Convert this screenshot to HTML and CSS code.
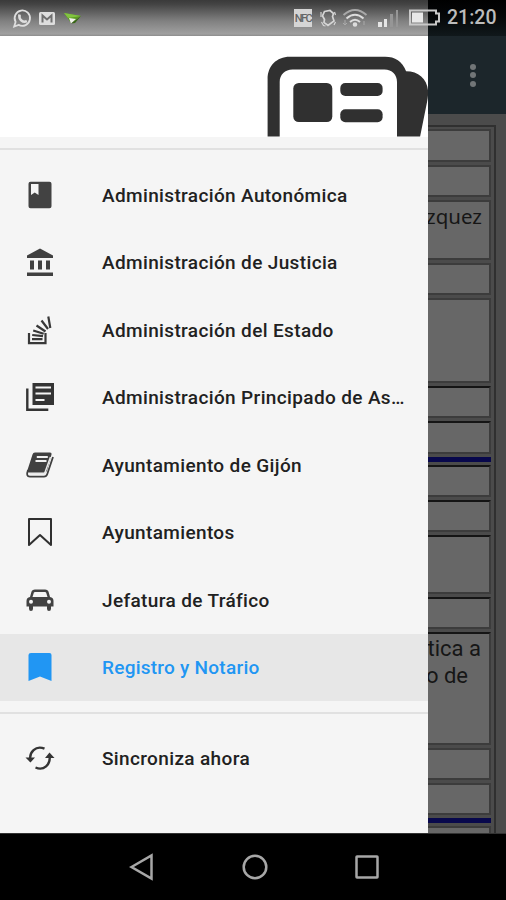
FILE: index.html
```html
<!DOCTYPE html>
<html lang="es">
<head>
<meta charset="utf-8">
<title>Trámites</title>
<link rel="stylesheet" href="styles.css">
</head>
<body>
<div class="phone">
  <header class="status">
    <svg class="notifications" viewBox="0 0 75 24" width="75" height="24">
      <g fill="none" stroke="#dedede">
        <path d="M2.2 20.500l1.400-4.600a7.700 7.700 0 1 1 3 3z" stroke-width="1.800"/>
        <path d="M7.500 8.500c-1 5.400 3.600 8.500 7.400 6.700" stroke-width="2.600"/>
      </g>
      <rect x="27" y="6" width="16" height="13" rx="1.500" fill="#dedede"/>
      <path d="M30.500 16.500V9.500l4.500 4 4.500-4v7" fill="none" stroke="#707070" stroke-width="2"/>
      <path d="M52 7l17 3-10 7z" fill="#5b9d20"/>
      <path d="M52 7l17 3-13 2z" fill="#82c341"/>
      <path d="M57 12l7 1-5 4.500z" fill="#f2f2ed"/>
      <path d="M69 10l-10 7.500 4-.5z" fill="#376714"/>
    </svg>
    <div class="system">
      <span class="nfc">NFC</span>
      <svg viewBox="0 0 18 20" width="18" height="20" fill="none" stroke="#d5d5d5" stroke-width="1.700">
        <path d="M5.500 3.500l5.500-1 3.500 3-1 3 1.500 4.500-6 4.500-4-3 .5-3L3.500 8z"/>
        <path d="M2 4v5M15.500 4l1 3M2.500 14l2 3.500 2 .5M16.500 14l-1.500 3" stroke-width="1.200"/>
      </svg>
      <svg class="wifi" viewBox="0 0 26 20" width="26" height="20" fill="none" stroke="#dcdcdc" stroke-width="2">
        <path d="M1.500 7q11.500-10 23 0" stroke="#a8a8a8"/>
        <path d="M4.500 10.500q8.500-7.500 17 0M8 14q5-4.500 10 0"/>
        <circle cx="13" cy="16.500" r="1.300" fill="#dcdcdc"/>
        <path d="M3 12v5m-2-2 2 2 2-2M22 17v-4" stroke="#aaa" stroke-width="1"/>
      </svg>
      <svg class="signal" viewBox="0 0 22 20" width="22" height="20">
        <path d="M1 14h4v5H1zM7 11h3v8H7z" fill="#e5e5e5"/>
        <path d="M13 6h3v13h-3zM19 2h2v17h-2z" fill="#969696"/>
      </svg>
      <svg class="battery" viewBox="0 0 32 18" width="32" height="18">
        <path d="M1 1.500h26v3h3v8h-3v3H1z" fill="none" stroke="#c9c9c9" stroke-width="2"/>
        <path d="M3 3.500h11v10H3z" fill="#e9e9e9"/>
      </svg>
      <time>21:20</time>
    </div>
  </header>

  <div class="content">
    <nav class="drawer">
      <div class="cover">
        <svg viewBox="267 56 162 81" width="162" height="81">
          <path d="M267.600 136.500V79c0-13 9-22.300 22-22.300h95.500c10 0 17 4.500 21 14.500 13 0 22 8.500 22 21.500 0 3-.4 6-1 9l-7 34.800H397V82c0-7.500-5-12.500-12.500-12.500H292.500c-7.500 0-12.800 5-12.800 12.500v54.500z" fill="#303030"/>
          <rect x="293.300" y="83" width="39" height="39" rx="5.500" fill="#303030"/>
          <rect x="340.300" y="83" width="42.300" height="13" rx="5" fill="#303030"/>
          <rect x="340.300" y="109.300" width="42.300" height="13" rx="5" fill="#303030"/>
        </svg>
      </div>
      <hr>
      <ul class="menu">
        <li><svg viewBox="0 0 28 28"><path d="M4.500.7h19q2 0 2 2v22.600q0 2-2 2h-19q-2 0-2-2V2.700q0-2 2-2z" fill="#424242"/><path d="M5 3h7.500v11L8.750 11.500 5 14z" fill="#f5f5f5"/></svg><span>Administración Autonómica</span></li>
        <li><svg viewBox="0 0 28 28"><path d="M14 .5l13 7v2.500H1V7.500zM4 12.500h4v9H4zM12 12.500h4v9h-4zM20 12.500h4v9h-4zM1 24.500h26V28H1z" fill="#404040"/></svg><span>Administración de Justicia</span></li>
        <li><svg viewBox="0 0 28 28" fill="none" stroke="#383838" stroke-width="2.200"><path d="M3 17v10.200h16.500V17M6 23.200h10.500M6.200 19l10.800 1.200M7.200 14.500l10.500 3.200M10.500 9.500l9 6M15.500 4.500l6.500 8.500M22.300.5l2 11.500"/></svg><span>Administración del Estado</span></li>
        <li><svg viewBox="0 0 28 28"><path d="M6.500 0H28v22H6.500z" fill="#343434"/><path d="M9.500 4.500h15.500M9.500 10.500h15.500M9.500 17h9" stroke="#f5f5f5" stroke-width="2.200"/><path d="M1.300 5.500v21.200h21" fill="none" stroke="#343434" stroke-width="2.400"/></svg><span>Administración Principado de As…</span></li>
        <li><svg viewBox="0 0 28 28"><path d="M9 1.500h15q2 0 1.500 2l-4.500 16q-.6 2-2.500 2H3q-1.500 0-2-1L6.500 3.500q.5-2 2.500-2z" fill="#404040"/><path d="M10.800 6h11M9.500 10h11" stroke="#f0f0f0" stroke-width="1.800"/><path d="M2 19Q-.5 25.700 4 25.700h14q2.400 0 3.200-2.400L27 6" fill="none" stroke="#404040" stroke-width="1.800"/><path d="M4 22.800h14.500L24.500 6" fill="none" stroke="#e9e9e9" stroke-width="1.500"/></svg><span>Ayuntamiento de Gijón</span></li>
        <li><svg viewBox="0 0 28 28"><path d="M3 1h22v26l-11-10L3 27z" fill="none" stroke="#303030" stroke-width="2" stroke-linejoin="round"/></svg><span>Ayuntamientos</span></li>
        <li><svg viewBox="0 0 28 28"><path d="M9 3.500h10q3 0 3.700 2.700L24 11q3.500.5 3.500 4v5.500H25v2.200q0 2.300-2 2.300t-2-2.300v-2.200H7v2.200Q7 25 5 25t-2-2.300v-2.200H.5V15q0-3.500 3.500-4l1.300-4.800Q6 3.500 9 3.500z" fill="#424242"/><path d="M9 6h10q.9 0 1.200.8l1.300 4.200h-15l1.300-4.200Q8.100 6 9 6z" fill="#f5f5f5"/><circle cx="5" cy="15.700" r="2" fill="#f5f5f5"/><circle cx="23" cy="15.700" r="2" fill="#f5f5f5"/></svg><span>Jefatura de Tráfico</span></li>
        <li class="selected"><svg viewBox="0 0 28 28"><path d="M5 0h18.500q2 0 2 2v26L14 23.500 2.500 28V2q0-2 2.500-2z" fill="#2196f3"/></svg><span>Registro y Notario</span></li>
      </ul>
      <hr class="second">
      <ul class="menu">
        <li><svg viewBox="0 0 28 28" fill="none" stroke="#343434" stroke-width="2.400"><path d="M4.500 17C2.500 8 10 1 18.500 4.700M23.500 11.500c1.500 9.500-6 15.500-14 12"/><path d="M-.5 13.500h9.500L4.500 18.500zM19 14h9.500l-5-5.500z" fill="#343434" stroke="none"/></svg><span>Sincroniza ahora</span></li>
      </ul>
    </nav>

    <main class="page">
      <div class="appbar"><i></i><i></i><i></i></div>
      <div class="sheet">
        <div class="table">
          <div></div>
          <div></div>
          <div class="name"><p>zquez</p></div>
          <div></div>
          <div></div>
          <div class="dark"></div>
          <div class="dark"></div>
          <b></b>
          <div class="dark"></div>
          <div class="dark"></div>
          <div class="dark"></div>
          <div class="dark"></div>
          <div class="dark note"><p>tica a</p><p class="short">o de</p></div>
          <div></div>
          <div></div>
          <b></b>
          <div></div>
        </div>
      </div>
    </main>
  </div>

  <footer class="keys">
    <svg viewBox="0 0 26 28" width="26" height="28"><path d="M2.500 14L22.500 2.500v23z"/></svg>
    <svg viewBox="0 0 26 28" width="26" height="28"><circle cx="13" cy="14" r="11.300"/></svg>
    <svg viewBox="0 0 26 28" width="26" height="28"><rect x="2.500" y="3.500" width="21" height="21" rx=".5"/></svg>
  </footer>
</div>
</body>
</html>
```
FILE: styles.css
```css
* { box-sizing: border-box; }

body {
  margin: 0;
  background: #000;
  font-family: Roboto, "Liberation Sans", sans-serif;
}

.phone {
  display: flex;
  flex-direction: column;
  width: 506px;
  height: 900px;
  overflow: hidden;
}

.status {
  display: flex;
  justify-content: space-between;
  align-items: center;
  flex: none;
  height: 36px;
  padding: 0 8px 0 12px;
  background:
    linear-gradient(#3a3a3a, #444 12%, #808080 58%, #a0a0a0 94%, #8d8d8d) 0 0 / 428px 36px no-repeat,
    linear-gradient(#000, #050708 45%, #10181b);
}

.system { display: flex; align-items: center; }

.nfc {
  width: 18px;
  height: 18px;
  margin-right: 7px;
  background: #d5d5d5;
  color: #656565;
  font: 500 11px/19px Roboto, sans-serif;
  letter-spacing: -1.500px;
  text-align: center;
}

.wifi { margin-left: 5px; }
.signal { margin-left: 9px; }
.battery { margin-left: 10px; }

.status time {
  width: 51px;
  margin-left: 6px;
  color: #bcbcbc;
  font-size: 19.500px;
  font-weight: 500;
  line-height: 38px;
  white-space: nowrap;
}

.content { display: flex; flex: 1; min-height: 0; }

.drawer {
  width: 428px;
  flex: none;
  overflow: hidden;
  background: #f5f5f5;
}

.cover {
  display: flex;
  justify-content: flex-end;
  align-items: flex-end;
  height: 101px;
  background: #fff;
}

.cover svg { margin-right: -1px; }

.drawer hr {
  height: 2px;
  margin: 11px 0;
  border: 0;
  background: #e1e1e1;
}

.drawer .second { margin: 10.500px 0; }

.menu { margin: 0; padding: 0; list-style: none; }

.menu li {
  display: flex;
  align-items: center;
  height: 67.500px;
  padding: 0 22px 0 26px;
  color: #212121;
  font-size: 19px;
  font-weight: 500;
  letter-spacing: .36px;
}

.menu svg { flex: none; width: 28px; height: 28px; margin-right: 48px; overflow: visible; }

.menu span { padding-top: 1px; white-space: nowrap; }

.menu .selected { background: #e7e7e7; color: #2196f3; letter-spacing: .25px; }

.page {
  display: flex;
  flex-direction: column;
  flex: 1;
  min-width: 0;
  overflow: hidden;
  background: #4b4b4b;
}

.appbar {
  display: flex;
  flex: none;
  flex-direction: column;
  align-items: center;
  justify-content: center;
  gap: 2.500px;
  height: 78px;
  padding-left: 12px;
  background: #1c262b;
}

.appbar i { width: 6px; height: 6px; border-radius: 50%; background: #717577; }

.sheet { padding: 11px 10px 0 0; }

.table {
  display: grid;
  grid-template-columns: minmax(0, 1fr);
  grid-template-rows: 33px 32px 60px 31.500px 85px 32.500px 32.500px 5.500px 32px 32px 58.500px 32.500px 112.500px 32px 32px 5.500px 30px;
  row-gap: 3px;
  padding: 2px 3px 0 0;
  border: solid #303030;
  border-width: 2px 2px 0 0;
}

.table > div {
  border: solid #3c3c3c;
  border-width: 2px 2px 2px 0;
  background: #676767;
}

.table > .dark { border-top-color: #151515; }
.table b { background: #08084c; }

.table p {
  margin: 0;
  color: #161616;
  font: 22px/27px Roboto, sans-serif;
  white-space: nowrap;
}

.name { display: flex; justify-content: flex-end; padding: 1px 7px 0 0; }
.table .name p { font-family: "Noto Sans", sans-serif; font-size: 20.500px; }
.note { display: flex; flex-direction: column; align-items: flex-end; padding: 1px 8px 0 0; }
.note .short { padding-right: 13px; }

.keys {
  display: flex;
  flex: none;
  align-items: center;
  gap: 86.500px;
  height: 67px;
  padding-left: 129px;
  border-top: 1px solid #333;
  background: #000;
}

.keys svg { fill: none; stroke: #a7a7a7; stroke-width: 2.500; }
```
